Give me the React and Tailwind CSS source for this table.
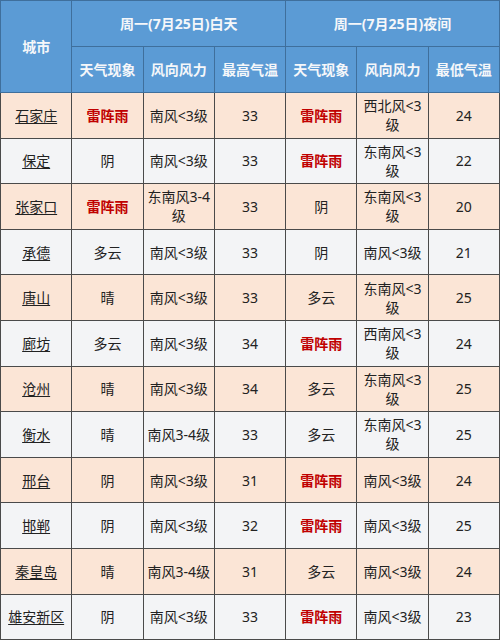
import React from "react";

const rows = [
  ["石家庄", "雷阵雨", "南风<3级", "33", "雷阵雨", "西北风<3级", "24"],
  ["保定", "阴", "南风<3级", "33", "雷阵雨", "东南风<3级", "22"],
  ["张家口", "雷阵雨", "东南风3-4级", "33", "阴", "东南风<3级", "20"],
  ["承德", "多云", "南风<3级", "33", "阴", "南风<3级", "21"],
  ["唐山", "晴", "南风<3级", "33", "多云", "东南风<3级", "25"],
  ["廊坊", "多云", "南风<3级", "34", "雷阵雨", "西南风<3级", "24"],
  ["沧州", "晴", "南风<3级", "34", "多云", "东南风<3级", "25"],
  ["衡水", "晴", "南风3-4级", "33", "多云", "东南风<3级", "25"],
  ["邢台", "阴", "南风<3级", "31", "雷阵雨", "南风<3级", "24"],
  ["邯郸", "阴", "南风<3级", "32", "雷阵雨", "南风<3级", "25"],
  ["秦皇岛", "晴", "南风3-4级", "31", "多云", "南风<3级", "24"],
  ["雄安新区", "阴", "南风<3级", "33", "雷阵雨", "南风<3级", "23"],
];

const head = "border border-[#3f6f9c] bg-[#5b9bd5] text-[#f5f7fa] font-bold text-center align-middle";
const cell = "border border-[#4a4a4a] text-center align-middle px-0.5 leading-[19px]";

export default function App() {
  return (
    <div
      className="w-[500px] h-[640px] bg-white text-[14px] text-[#222]"
      style={{ fontFamily: '"Noto Sans", "Noto Sans CJK SC", sans-serif' }}
    >
      <table className="w-[500px] h-[640px] table-fixed border-collapse">
        <thead>
          <tr className="h-[46px]">
            <th rowSpan={2} className={head}>城市</th>
            <th colSpan={3} className={head}>周一(7月25日)白天</th>
            <th colSpan={3} className={head}>周一(7月25日)夜间</th>
          </tr>
          <tr className="h-[46px]">
            <th className={head}>天气现象</th>
            <th className={head}>风向风力</th>
            <th className={head}>最高气温</th>
            <th className={head}>天气现象</th>
            <th className={head}>风向风力</th>
            <th className={head}>最低气温</th>
          </tr>
        </thead>
        <tbody>
          {rows.map((r, i) => (
            <tr key={r[0]} className={i % 2 === 0 ? "h-[45.6px] bg-[#fbe5d6]" : "h-[45.6px] bg-[#f3f4f6]"}>
              {r.map((v, j) => (
                <td
                  key={j}
                  className={
                    j === 0
                      ? cell + " underline underline-offset-2"
                      : v === "雷阵雨"
                      ? cell + " text-[#c00000] font-bold"
                      : cell
                  }
                >
                  {v}
                </td>
              ))}
            </tr>
          ))}
        </tbody>
      </table>
    </div>
  );
}
